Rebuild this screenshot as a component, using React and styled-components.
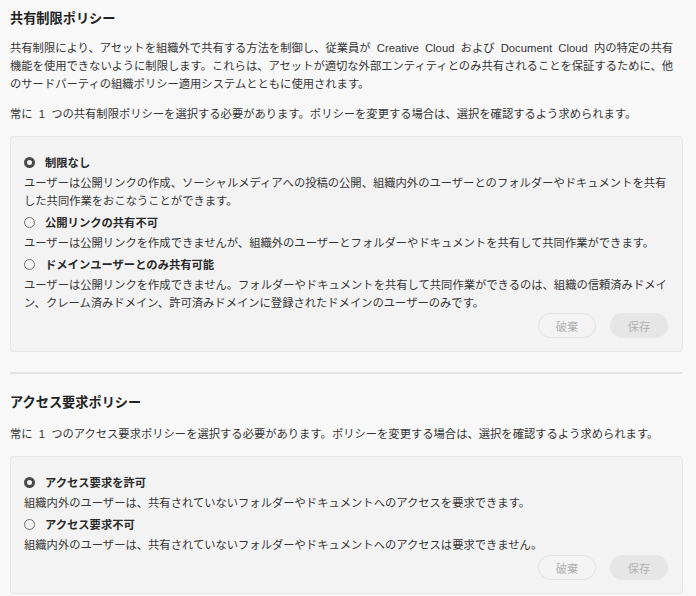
import React from 'react';
import styled, { createGlobalStyle } from 'styled-components';

const GlobalStyle = createGlobalStyle`
  html, body {
    margin: 0;
    background: #f8f8f8;
  }
  body {
    font-family: "Liberation Sans", "Noto Sans CJK JP", sans-serif;
    color: #2f2f2f;
    word-spacing: 3px;
  }
`;

const Page = styled.div`
  padding: 9px 13px 0 10px;
  width: 673px;
  line-break: strict;
`;

const Section = styled.section`
  display: flex;
  flex-direction: column;
`;

const Title = styled.h2`
  margin: 0;
  font-size: 13.2px;
  line-height: 20px;
  font-weight: 700;
  color: #222;
`;

const Paragraph = styled.p`
  margin: ${(p) => p.$gap || 12}px 0 0;
  font-size: 11.3px;
  line-height: 18px;
  color: #353535;
`;

const Card = styled.div`
  margin-top: 13px;
  background: #f3f3f3;
  border: 1px solid #e6e6e6;
  border-radius: 4px;
  padding: 13px 14px 13px 13px;
  display: flex;
  flex-direction: column;
`;

const Option = styled.div`
  display: flex;
  flex-direction: column;
`;

const OptionHead = styled.label`
  display: flex;
  align-items: center;
  gap: 10px;
  height: 24px;
  font-size: 11.3px;
  font-weight: 700;
  color: #2a2a2a;
`;

const Radio = styled.span`
  box-sizing: border-box;
  width: 11px;
  height: 11px;
  border-radius: 50%;
  border: ${(p) => (p.$checked ? '3.5px solid #4a4a4a' : '1.5px solid #6e6e6e')};
  background: ${(p) => (p.$checked ? '#f3f3f3' : 'transparent')};
  flex-shrink: 0;
`;

const OptionDesc = styled.div`
  font-size: 11.3px;
  line-height: 18px;
  color: #353535;
`;

const Actions = styled.div`
  display: flex;
  justify-content: flex-end;
  gap: 14px;
  margin-top: 1px;
`;

const Button = styled.button`
  box-sizing: border-box;
  width: 58px;
  height: 25px;
  border-radius: 13px;
  font-family: inherit;
  font-size: 11.3px;
  color: #b2b2b2;
  background: ${(p) => (p.$variant === 'primary' ? '#e6e6e6' : 'transparent')};
  border: ${(p) => (p.$variant === 'primary' ? 'none' : '1.5px solid #e1e1e1')};
  padding: 0;
  cursor: default;
`;

const Divider = styled.hr`
  margin: 20px 0 19px;
  border: none;
  height: 2px;
  background: #e4e4e4;
`;

const sharing = [
  {
    label: '制限なし',
    desc: 'ユーザーは公開リンクの作成、ソーシャルメディアへの投稿の公開、組織内外のユーザーとのフォルダーやドキュメントを共有した共同作業をおこなうことができます。',
    checked: true,
  },
  {
    label: '公開リンクの共有不可',
    desc: 'ユーザーは公開リンクを作成できませんが、組織外のユーザーとフォルダーやドキュメントを共有して共同作業ができます。',
  },
  {
    label: 'ドメインユーザーとのみ共有可能',
    desc: 'ユーザーは公開リンクを作成できません。フォルダーやドキュメントを共有して共同作業ができるのは、組織の信頼済みドメイン、クレーム済みドメイン、許可済みドメインに登録されたドメインのユーザーのみです。',
  },
];

const access = [
  {
    label: 'アクセス要求を許可',
    desc: '組織内外のユーザーは、共有されていないフォルダーやドキュメントへのアクセスを要求できます。',
    checked: true,
  },
  {
    label: 'アクセス要求不可',
    desc: '組織内外のユーザーは、共有されていないフォルダーやドキュメントへのアクセスは要求できません。',
  },
];

const PolicyCard = ({ options }) => (
  <Card>
    {options.map((o) => (
      <Option key={o.label}>
        <OptionHead>
          <Radio $checked={o.checked} />
          {o.label}
        </OptionHead>
        <OptionDesc>{o.desc}</OptionDesc>
      </Option>
    ))}
    <Actions>
      <Button>破棄</Button>
      <Button $variant='primary'>保存</Button>
    </Actions>
  </Card>
);

const App = () => {
  return (
    <Page lang='ja'>
      <GlobalStyle />
      <Section>
        <Title>共有制限ポリシー</Title>
        <Paragraph $gap={10}>
          共有制限により、アセットを組織外で共有する方法を制御し、従業員が Creative Cloud および Document Cloud
          内の特定の共有機能を使用できないように制限します。これらは、アセットが適切な外部エンティティとのみ共有されることを保証するために、他のサードパーティの組織ポリシー適用システムとともに使用されます。
        </Paragraph>
        <Paragraph>
          常に 1 つの共有制限ポリシーを選択する必要があります。ポリシーを変更する場合は、選択を確認するよう求められます。
        </Paragraph>
        <PolicyCard options={sharing} />
      </Section>
      <Divider />
      <Section>
        <Title>アクセス要求ポリシー</Title>
        <Paragraph>
          常に 1 つのアクセス要求ポリシーを選択する必要があります。ポリシーを変更する場合は、選択を確認するよう求められます。
        </Paragraph>
        <PolicyCard options={access} />
      </Section>
    </Page>
  );
};

export default App;
